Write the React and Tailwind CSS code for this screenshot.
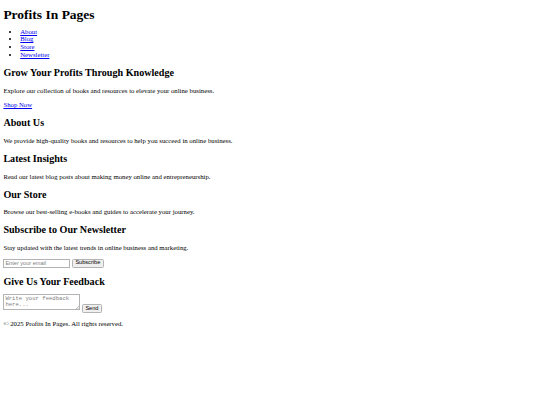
export default function App() {
  return (
    <div className="min-h-screen bg-white px-[3.375px] pb-[3.375px] font-['Liberation_Serif',serif] text-[6.75px] leading-[7.76px] text-black">
      <header>
        <h1 className="mt-[7px] mb-[5px] text-[13.5px] leading-[15.525px] font-bold">Profits In Pages</h1>
        <nav>
          <ul className="mt-[5px] mb-[6.75px] list-disc pl-[16.875px]">
            <li><a href="#about" className="text-[#0000ee] underline">About</a></li>
            <li><a href="#blog" className="text-[#0000ee] underline">Blog</a></li>
            <li><a href="#store" className="text-[#0000ee] underline">Store</a></li>
            <li><a href="#newsletter" className="text-[#0000ee] underline">Newsletter</a></li>
          </ul>
        </nav>
      </header>

      <main>
        {/* hero */}
        <section>
          <h2 className="my-[8.2px] text-[10.125px] leading-[11.64px] font-bold">Grow Your Profits Through Knowledge</h2>
          <p className="my-[6.75px]">Explore our collection of books and resources to elevate your online business.</p>
          <p className="my-[6.75px]"><a href="#store" className="text-[#0000ee] underline">Shop Now</a></p>
        </section>

        <section id="about">
          <h2 className="my-[8.2px] text-[10.125px] leading-[11.64px] font-bold">About Us</h2>
          <p className="my-[6.75px]">We provide high-quality books and resources to help you succeed in online business.</p>
        </section>

        <section id="blog">
          <h2 className="my-[8.2px] text-[10.125px] leading-[11.64px] font-bold">Latest Insights</h2>
          <p className="my-[6.75px]">Read our latest blog posts about making money online and entrepreneurship.</p>
        </section>

        <section id="store">
          <h2 className="my-[8.2px] text-[10.125px] leading-[11.64px] font-bold">Our Store</h2>
          <p className="my-[6.75px]">Browse our best-selling e-books and guides to accelerate your journey.</p>
        </section>

        <section id="newsletter">
          <h2 className="my-[8.2px] text-[10.125px] leading-[11.64px] font-bold">Subscribe to Our Newsletter</h2>
          <p className="my-[6.75px]">Stay updated with the latest trends in online business and marketing.</p>
          <form className="flex items-center gap-[1.5px]">
            <input
              type="email"
              placeholder="Enter your email"
              className="h-[9px] w-[67px] border border-[#b3b3b3] bg-white px-[1px] font-['Liberation_Sans',sans-serif] text-[5.6px] placeholder:text-[#808080]"
            />
            <button type="button" className="h-[9px] rounded-[1.5px] border border-[#b3b3b3] bg-[#efefef] px-[2.5px] font-['Liberation_Sans',sans-serif] text-[5.6px] leading-none">
              Subscribe
            </button>
          </form>
        </section>

        <section>
          <h2 className="mt-[8.2px] mb-[6.5px] text-[10.125px] leading-[11.64px] font-bold">Give Us Your Feedback</h2>
          <form className="flex items-start gap-[1.5px]">
            <div className="relative">
              <textarea
                placeholder="Write your feedback here..."
                className="block h-[16px] w-[77px] resize-none border border-[#b3b3b3] bg-white px-[1px] py-[0.5px] font-['Liberation_Mono',monospace] text-[5.6px] leading-[6.4px] placeholder:text-[#808080]"
              />
              <svg className="absolute right-[1px] bottom-[1px]" width="3" height="3" viewBox="0 0 3 3">
                <path d="M3 0L0 3M3 1.5L1.5 3" stroke="#8a8a8a" strokeWidth="0.5" />
              </svg>
            </div>
            <button type="button" className="mt-[10px] h-[9px] rounded-[1.5px] border border-[#b3b3b3] bg-[#efefef] px-[2.5px] font-['Liberation_Sans',sans-serif] text-[5.6px] leading-none">
              Send
            </button>
          </form>
        </section>
      </main>

      <footer>
        <p className="my-[6.75px]">© 2025 Profits In Pages. All rights reserved.</p>
      </footer>
    </div>
  );
}
